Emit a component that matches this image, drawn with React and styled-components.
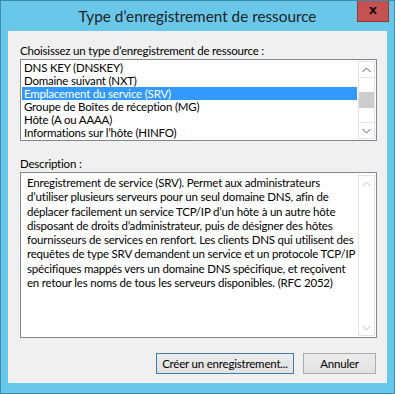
import React from 'react';
import styled, { createGlobalStyle } from 'styled-components';

const GlobalStyle = createGlobalStyle`
  html, body { margin: 0; padding: 0; background: #ffffff; }
  body { font-family: Lato, "Noto Sans", "Liberation Sans", sans-serif; }
`;

const records = [
  'DNS KEY (DNSKEY)',
  'Domaine suivant (NXT)',
  'Emplacement du service (SRV)',
  'Groupe de Boîtes de réception (MG)',
  'Hôte (A ou AAAA)',
  'Informations sur l’hôte (HINFO)',
];

const descriptionLines = [
  'Enregistrement de service (SRV). Permet aux administrateurs',
  'd’utiliser plusieurs serveurs pour un seul domaine DNS, afin de',
  'déplacer facilement un service TCP/IP d’un hôte à un autre hôte',
  'disposant de droits d’administrateur, puis de désigner des hôtes',
  'fournisseurs de services en renfort. Les clients DNS qui utilisent des',
  'requêtes de type SRV demandent un service et un protocole TCP/IP',
  'spécifiques mappés vers un domaine DNS spécifique, et reçoivent',
  'en retour les noms de tous les serveurs disponibles. (RFC 2052)',
];

export default function App() {
  return (
    <>
      <GlobalStyle />
      <Window>
        <TitleBar>
          <span />
          <Title>Type d’enregistrement de ressource</Title>
          <CloseButton>x</CloseButton>
        </TitleBar>
        <Client>
          <Label>Choisissez un type d’enregistrement de ressource :</Label>
          <ListBox>
            <Rows>
              {records.map((r, i) => (
                <Row key={r} $selected={i === 2}>{r}</Row>
              ))}
            </Rows>
            <ScrollBar>
              <Arrow><Chevron up /></Arrow>
              <Track $top={14} $size={16} />
              <Arrow><Chevron /></Arrow>
            </ScrollBar>
          </ListBox>
          <Label $gap={15}>Description :</Label>
          <DescBox>
            <DescText>
              {descriptionLines.map((l) => <div key={l}>{l}</div>)}
            </DescText>
            <ScrollBar $disabled>
              <Arrow $disabled><Chevron up disabled /></Arrow>
              <Track />
              <Arrow $disabled><Chevron disabled /></Arrow>
            </ScrollBar>
          </DescBox>
          <Buttons>
            <Button $default $width={138}>Créer un enregistrement...</Button>
            <Button $width={73}>Annuler</Button>
          </Buttons>
        </Client>
      </Window>
    </>
  );
}

function Chevron({ up, disabled }) {
  return (
    <svg width="9" height="6" viewBox="0 0 9 6">
      <path
        d={up ? 'M0.5 5 L4.5 1 L8.5 5' : 'M0.5 1 L4.5 5 L8.5 1'}
        fill="none"
        stroke={disabled ? '#bfbfbf' : '#606060'}
        strokeWidth="1"
      />
    </svg>
  );
}

const uiText = `
  font-size: 11.5px;
  letter-spacing: -0.2px;
  color: #000;
`;

const Window = styled.div`
  width: 395px;
  height: 394px;
  box-sizing: border-box;
  background: #69c8ea;
  border: 1px solid #3a8cae;
  display: flex;
  flex-direction: column;
`;

const TitleBar = styled.div`
  height: 30px;
  display: grid;
  grid-template-columns: 1fr auto 1fr;
  align-items: start;
`;

const Title = styled.div`
  font-size: 15.3px;
  color: #222;
  line-height: 31px;
  white-space: nowrap;
`;

const CloseButton = styled.div`
  justify-self: end;
  margin-right: 5px;
  width: 32px;
  height: 21px;
  box-sizing: border-box;
  background: #c75050;
  border: 1px solid #8e3a36;
  border-top: none;
  color: #111;
  font-family: "DejaVu Sans", sans-serif;
  font-weight: bold;
  font-size: 13px;
  line-height: 18px;
  text-align: center;
`;

const Client = styled.div`
  flex: 1;
  margin: 0 7px 10px 7px;
  background: #f0f0f0;
  padding: 12px 10px 0 12px;
  display: flex;
  flex-direction: column;
`;

const Label = styled.div`
  ${uiText}
  line-height: 15px;
  margin-top: ${(p) => p.$gap || 0}px;
  margin-bottom: 1px;
  white-space: nowrap;
`;

const ListBox = styled.div`
  height: 82px;
  box-sizing: border-box;
  border: 1px solid #828790;
  background: #fff;
  display: flex;
  padding: 1px;
`;

const Rows = styled.div`
  flex: 1;
  display: flex;
  flex-direction: column;
`;

const Row = styled.div`
  ${uiText}
  height: 13px;
  line-height: 13px;
  padding-left: 2px;
  white-space: nowrap;
  color: ${(p) => (p.$selected ? '#fff' : '#000')};
  background: ${(p) => (p.$selected ? '#3399ff' : 'transparent')};
`;

const ScrollBar = styled.div`
  width: 17px;
  box-sizing: border-box;
  border: 1px solid #e3e3e3;
  background: #fff;
  display: flex;
  flex-direction: column;
  margin-left: 1px;
`;

const Arrow = styled.div`
  height: 15px;
  display: flex;
  align-items: center;
  justify-content: center;
  border-bottom: 1px solid #e3e3e3;
  &:last-child {
    border-bottom: none;
    border-top: 1px solid #e3e3e3;
  }
  ${(p) => p.$disabled && 'border-color: transparent !important;'}
`;

const Track = styled.div`
  flex: 1;
  position: relative;
  &::after {
    content: "";
    display: ${(p) => (p.$size ? 'block' : 'none')};
    position: absolute;
    left: 0;
    right: 0;
    top: ${(p) => p.$top || 0}px;
    height: ${(p) => p.$size || 0}px;
    background: #cdcdcd;
  }
`;

const DescBox = styled.div`
  height: 166px;
  box-sizing: border-box;
  border: 1px solid #828790;
  background: #fff;
  display: flex;
  padding: 2px 1px 1px 1px;
`;

const DescText = styled.div`
  ${uiText}
  flex: 1;
  line-height: 14.3px;
  padding: 1px 0 0 5px;
  white-space: nowrap;
  overflow: hidden;
`;

const Buttons = styled.div`
  display: flex;
  justify-content: flex-end;
  gap: 9px;
  margin-top: 15px;
  padding-right: 1px;
`;

const Button = styled.div`
  ${uiText}
  height: 21px;
  box-sizing: border-box;
  width: ${(p) => (p.$width ? `${p.$width}px` : 'auto')};
  border: 1px solid ${(p) => (p.$default ? '#3c7fb1' : '#acacac')};
  background: linear-gradient(#ececec, #e1e1e1);
  line-height: 19px;
  text-align: center;
  white-space: nowrap;
`;
